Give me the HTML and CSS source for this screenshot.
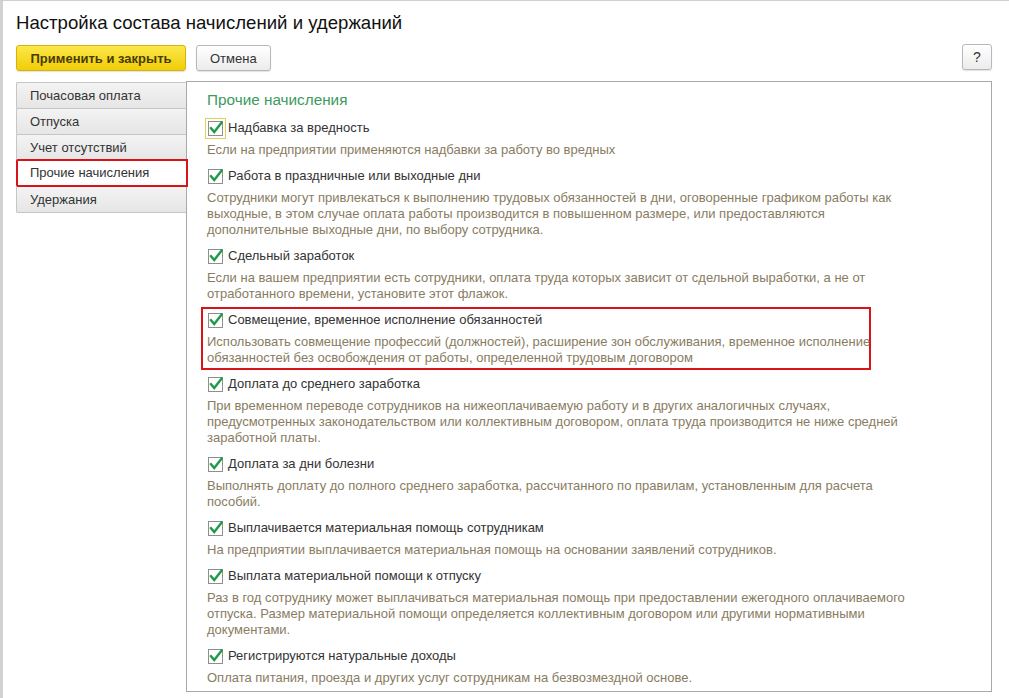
FILE: index.html
```html
<!DOCTYPE html>
<html lang="ru">
<head>
<meta charset="utf-8">
<title>Настройка состава начислений и удержаний</title>
<link rel="stylesheet" href="styles.css">
</head>
<body>
<div class="window">
  <h1 class="title">Настройка состава начислений и удержаний</h1>
  <div class="toolbar">
    <button class="btn btn-primary">Применить и закрыть</button>
    <button class="btn">Отмена</button>
    <span class="spacer"></span>
    <button class="btn btn-help">?</button>
  </div>
  <div class="main">
    <nav class="tabs">
      <div class="tab">Почасовая оплата</div>
      <div class="tab">Отпуска</div>
      <div class="tab">Учет отсутствий</div>
      <div class="tab tab-active">Прочие начисления</div>
      <div class="tab">Удержания</div>
    </nav>
    <section class="panel">
      <h2 class="heading">Прочие начисления</h2>

      <div class="item">
        <label class="check-row"><span class="cb cb-focus"><svg viewBox="0 0 15 15" width="15" height="15"><rect x="0.5" y="0.5" width="14" height="14" fill="#fff" stroke="#8e8e8e"/><path d="M3 7.2 L6.2 11 L13.6 1.6" fill="none" stroke="#1f9a45" stroke-width="2.4" stroke-linecap="square"/></svg></span>Надбавка за вредность</label>
        <p class="desc">Если на предприятии применяются надбавки за работу во вредных</p>
      </div>

      <div class="item">
        <label class="check-row"><span class="cb"><svg viewBox="0 0 15 15" width="15" height="15"><rect x="0.5" y="0.5" width="14" height="14" fill="#fff" stroke="#8e8e8e"/><path d="M3 7.2 L6.2 11 L13.6 1.6" fill="none" stroke="#1f9a45" stroke-width="2.4" stroke-linecap="square"/></svg></span>Работа в праздничные или выходные дни</label>
        <p class="desc">Сотрудники могут привлекаться к выполнению трудовых обязанностей в дни, оговоренные графиком работы как<br>выходные, в этом случае оплата работы производится в повышенном размере, или предоставляются<br>дополнительные выходные дни, по выбору сотрудника.</p>
      </div>

      <div class="item">
        <label class="check-row"><span class="cb"><svg viewBox="0 0 15 15" width="15" height="15"><rect x="0.5" y="0.5" width="14" height="14" fill="#fff" stroke="#8e8e8e"/><path d="M3 7.2 L6.2 11 L13.6 1.6" fill="none" stroke="#1f9a45" stroke-width="2.4" stroke-linecap="square"/></svg></span>Сдельный заработок</label>
        <p class="desc">Если на вашем предприятии есть сотрудники, оплата труда которых зависит от сдельной выработки, а не от<br>отработанного времени, установите этот флажок.</p>
      </div>

      <div class="item item-marked">
        <label class="check-row"><span class="cb"><svg viewBox="0 0 15 15" width="15" height="15"><rect x="0.5" y="0.5" width="14" height="14" fill="#fff" stroke="#8e8e8e"/><path d="M3 7.2 L6.2 11 L13.6 1.6" fill="none" stroke="#1f9a45" stroke-width="2.4" stroke-linecap="square"/></svg></span>Совмещение, временное исполнение обязанностей</label>
        <p class="desc">Использовать совмещение профессий (должностей), расширение зон обслуживания, временное исполнение<br>обязанностей без освобождения от работы, определенной трудовым договором</p>
      </div>

      <div class="item">
        <label class="check-row"><span class="cb"><svg viewBox="0 0 15 15" width="15" height="15"><rect x="0.5" y="0.5" width="14" height="14" fill="#fff" stroke="#8e8e8e"/><path d="M3 7.2 L6.2 11 L13.6 1.6" fill="none" stroke="#1f9a45" stroke-width="2.4" stroke-linecap="square"/></svg></span>Доплата до среднего заработка</label>
        <p class="desc">При временном переводе сотрудников на нижеоплачиваемую работу и в других аналогичных случаях,<br>предусмотренных законодательством или коллективным договором, оплата труда производится не ниже средней<br>заработной платы.</p>
      </div>

      <div class="item">
        <label class="check-row"><span class="cb"><svg viewBox="0 0 15 15" width="15" height="15"><rect x="0.5" y="0.5" width="14" height="14" fill="#fff" stroke="#8e8e8e"/><path d="M3 7.2 L6.2 11 L13.6 1.6" fill="none" stroke="#1f9a45" stroke-width="2.4" stroke-linecap="square"/></svg></span>Доплата за дни болезни</label>
        <p class="desc">Выполнять доплату до полного среднего заработка, рассчитанного по правилам, установленным для расчета<br>пособий.</p>
      </div>

      <div class="item">
        <label class="check-row"><span class="cb"><svg viewBox="0 0 15 15" width="15" height="15"><rect x="0.5" y="0.5" width="14" height="14" fill="#fff" stroke="#8e8e8e"/><path d="M3 7.2 L6.2 11 L13.6 1.6" fill="none" stroke="#1f9a45" stroke-width="2.4" stroke-linecap="square"/></svg></span>Выплачивается материальная помощь сотрудникам</label>
        <p class="desc">На предприятии выплачивается материальная помощь на основании заявлений сотрудников.</p>
      </div>

      <div class="item">
        <label class="check-row"><span class="cb"><svg viewBox="0 0 15 15" width="15" height="15"><rect x="0.5" y="0.5" width="14" height="14" fill="#fff" stroke="#8e8e8e"/><path d="M3 7.2 L6.2 11 L13.6 1.6" fill="none" stroke="#1f9a45" stroke-width="2.4" stroke-linecap="square"/></svg></span>Выплата материальной помощи к отпуску</label>
        <p class="desc">Раз в год сотруднику может выплачиваться материальная помощь при предоставлении ежегодного оплачиваемого<br>отпуска. Размер материальной помощи определяется коллективным договором или другими нормативными<br>документами.</p>
      </div>

      <div class="item">
        <label class="check-row"><span class="cb"><svg viewBox="0 0 15 15" width="15" height="15"><rect x="0.5" y="0.5" width="14" height="14" fill="#fff" stroke="#8e8e8e"/><path d="M3 7.2 L6.2 11 L13.6 1.6" fill="none" stroke="#1f9a45" stroke-width="2.4" stroke-linecap="square"/></svg></span>Регистрируются натуральные доходы</label>
        <p class="desc">Оплата питания, проезда и других услуг сотрудникам на безвозмездной основе.</p>
      </div>
    </section>
  </div>
</div>
</body>
</html>
```

FILE: styles.css
```css
* { box-sizing: border-box; }

html, body {
  margin: 0;
  padding: 0;
  background: #fff;
}

body {
  font-family: "Liberation Sans", Arial, sans-serif;
  font-size: 13px;
  color: #333;
}

.window {
  width: 1009px;
  height: 698px;
  border-left: 3px solid #d2d2d2;
  border-top: 1px solid #cfcfcf;
  overflow: hidden;
}

.title {
  margin: 10px 0 0 13px;
  font-size: 18.6px;
  font-weight: normal;
  line-height: 24px;
  color: #111;
}

.toolbar {
  display: flex;
  align-items: flex-start;
  gap: 10px;
  margin: 10px 0 0 13px;
  width: 976px;
}

.spacer { flex: 1; }

.btn {
  height: 26px;
  padding: 0 13px;
  font-family: "Liberation Sans", Arial, sans-serif;
  font-size: 13px;
  color: #333;
  background: linear-gradient(#ffffff, #ececec);
  border: 1px solid #b8b8b8;
  border-radius: 3px;
  box-shadow: 0 1px 1px rgba(0,0,0,0.12);
}

.btn-primary {
  width: 170px;
  font-weight: bold;
  color: #4a3c00;
  background: linear-gradient(#fbe84a, #f2cd08);
  border-color: #d6b20a;
}

.btn-help {
  width: 30px;
  padding: 0;
  margin-top: -1px;
  font-size: 14px;
}

.main {
  display: flex;
  margin: 10px 0 0 13px;
}

.tabs {
  width: 170px;
  padding-top: 1px;
  display: flex;
  flex-direction: column;
}

.tab {
  height: 27px;
  margin-bottom: -1px;
  padding-left: 13px;
  line-height: 25px;
  color: #333;
  background: linear-gradient(#f3f3f3, #e6e6e6);
  border: 1px solid #c6c6c6;
  border-right: none;
  border-radius: 2px 0 0 2px;
}

.tab-active {
  position: relative;
  z-index: 1;
  height: 28px;
  margin-top: -1px;
  margin-right: -2px;
  line-height: 24px;
  background: #fff;
  border: 2px solid #d7141a;
  padding-left: 12px;
}

.panel {
  width: 806px;
  height: 611px;
  border: 1px solid #a9a9a9;
  padding: 8px 0 0 20px;
}

.heading {
  margin: 0 0 10px 0;
  font-size: 15.3px;
  font-weight: normal;
  line-height: 20px;
  color: #3c9a5c;
}

.item {
  margin-bottom: 10px;
}

.check-row {
  display: flex;
  align-items: center;
  height: 16px;
  line-height: 16px;
  color: #333;
}

.cb {
  display: inline-flex;
  width: 15px;
  height: 15px;
  margin: 0 5px 0 1px;
}

.cb svg { display: block; }

.cb-focus {
  outline: 1px solid #e6cd55;
  outline-offset: 2px;
}

.desc {
  margin: 6px 0 0 0;
  line-height: 16px;
  color: #887c62;
  white-space: nowrap;
}

.item-marked {
  width: 670px;
  margin: -5px 0 6px -6px;
  padding: 3px 0 2px 4px;
  border: 2px solid #d7141a;
}
```
